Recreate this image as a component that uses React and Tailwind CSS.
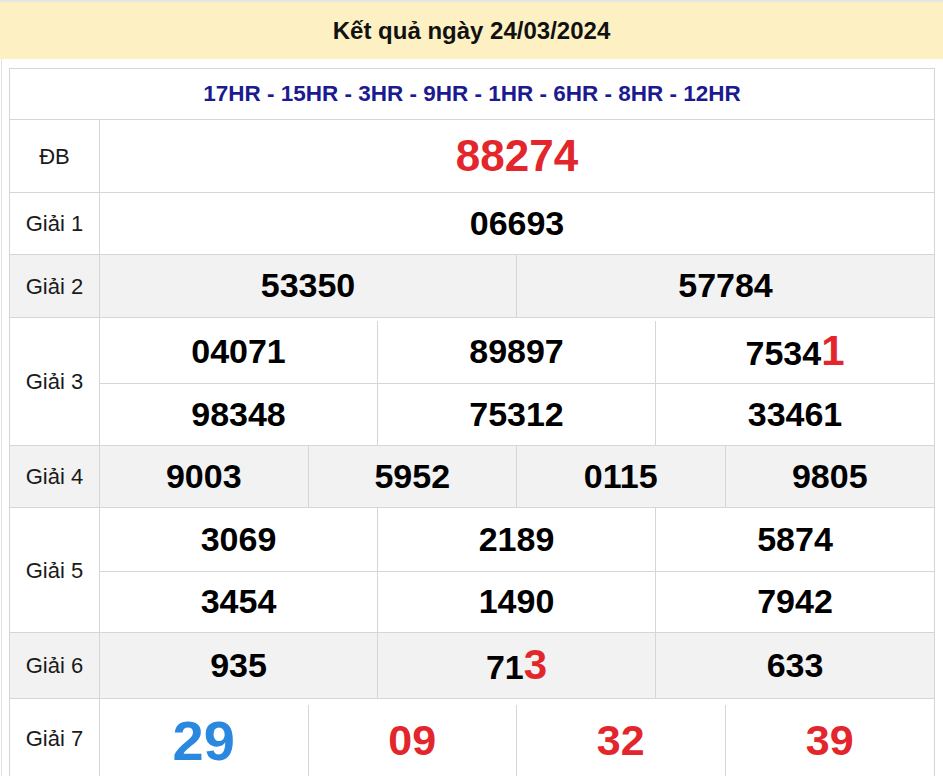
import React from "react";

const RED = "text-[#e3262b]";

function Num({ value, hot }) {
  // hot = last digit highlighted in red, a bit bigger
  if (!hot) return <span className="text-[34px] font-bold leading-none text-black">{value}</span>;
  return (
    <span className="leading-none">
      <span className="text-[34px] font-bold text-black">{value.slice(0, -1)}</span>
      <span className={`text-[42px] font-bold ${RED}`}>{value.slice(-1)}</span>
    </span>
  );
}

function Row({ label, height, gray, children }) {
  return (
    <div
      className={`grid grid-cols-[90px_1fr] border-t border-[#d6d6d6] ${gray ? "bg-[#f2f2f2]" : "bg-white"}`}
      style={{ height }}
    >
      <div className="flex items-center justify-center border-r border-[#d6d6d6] text-[22px] text-[#1a1a1a]">
        {label}
      </div>
      {children}
    </div>
  );
}

function Cells({ items, cols }) {
  return (
    <div className={`grid h-full ${cols === 2 ? "grid-cols-2" : cols === 3 ? "grid-cols-3" : "grid-cols-4"}`}>
      {items.map((it, i) => (
        <div
          key={i}
          className={`flex items-center justify-center pb-[2px] ${i < items.length - 1 ? "border-r border-[#d6d6d6]" : ""}`}
        >
          {it}
        </div>
      ))}
    </div>
  );
}

export default function App() {
  const g3 = [
    ["04071", "89897", "75341"],
    ["98348", "75312", "33461"],
  ];
  const g5 = [
    ["3069", "2189", "5874"],
    ["3454", "1490", "7942"],
  ];

  return (
    <div className="w-[943px] h-[776px] overflow-hidden bg-white" style={{ fontFamily: '"Liberation Sans", Arial, sans-serif' }}>
      <div className="h-[59px] border-t-2 border-[#e6e6e6] bg-[#fdf1c3] flex items-center justify-center">
        <h1 className="text-[24px] font-bold text-[#111]">Kết quả ngày 24/03/2024</h1>
      </div>

      <div className="ml-px border-l border-[#e2e2e2] pl-[7px] pr-[8px] pt-[9px]">
        <div className="border-x border-b border-[#d6d6d6] bg-white">
          <div className="h-[51px] border-t border-[#d6d6d6] flex items-center justify-center text-[22.5px] font-bold text-[#1b1b8f]">
            17HR - 15HR - 3HR - 9HR - 1HR - 6HR - 8HR - 12HR
          </div>

          <Row label="ĐB" height={73}>
            <div className="flex items-center justify-center">
              <span className={`text-[44px] font-bold leading-none ${RED}`}>88274</span>
            </div>
          </Row>

          <Row label="Giải 1" height={62}>
            <div className="flex items-center justify-center pb-[2px]">
              <Num value="06693" />
            </div>
          </Row>

          <Row label="Giải 2" height={63} gray>
            <Cells cols={2} items={[<Num value="53350" />, <Num value="57784" />]} />
          </Row>

          <Row label="Giải 3" height={128}>
            <div className="grid h-full grid-rows-[65px_1fr]">
              {g3.map((r, ri) => (
                <div key={ri} className={ri === 1 ? "border-t border-[#d6d6d6]" : "pt-[3px]"}>
                  <Cells cols={3} items={r.map((v, i) => <Num value={v} hot={ri === 0 && i === 2} />)} />
                </div>
              ))}
            </div>
          </Row>

          <Row label="Giải 4" height={62} gray>
            <Cells cols={4} items={["9003", "5952", "0115", "9805"].map((v) => <Num value={v} />)} />
          </Row>

          <Row label="Giải 5" height={125}>
            <div className="grid h-full grid-rows-[63px_1fr]">
              {g5.map((r, ri) => (
                <div key={ri} className={ri === 1 ? "border-t border-[#d6d6d6]" : ""}>
                  <Cells cols={3} items={r.map((v) => <Num value={v} />)} />
                </div>
              ))}
            </div>
          </Row>

          <Row label="Giải 6" height={66} gray>
            <Cells cols={3} items={[<Num value="935" />, <Num value="713" hot />, <Num value="633" />]} />
          </Row>

          <Row label="Giải 7" height={80}>
            <div className="h-full pt-[6px]">
              <Cells
                cols={4}
                items={[
                  <span className="text-[56px] font-bold leading-none text-[#2b88df]">29</span>,
                  <span className={`text-[43px] font-bold leading-none ${RED}`}>09</span>,
                  <span className={`text-[43px] font-bold leading-none ${RED}`}>32</span>,
                  <span className={`text-[43px] font-bold leading-none ${RED}`}>39</span>,
                ]}
              />
            </div>
          </Row>
        </div>
      </div>
    </div>
  );
}
